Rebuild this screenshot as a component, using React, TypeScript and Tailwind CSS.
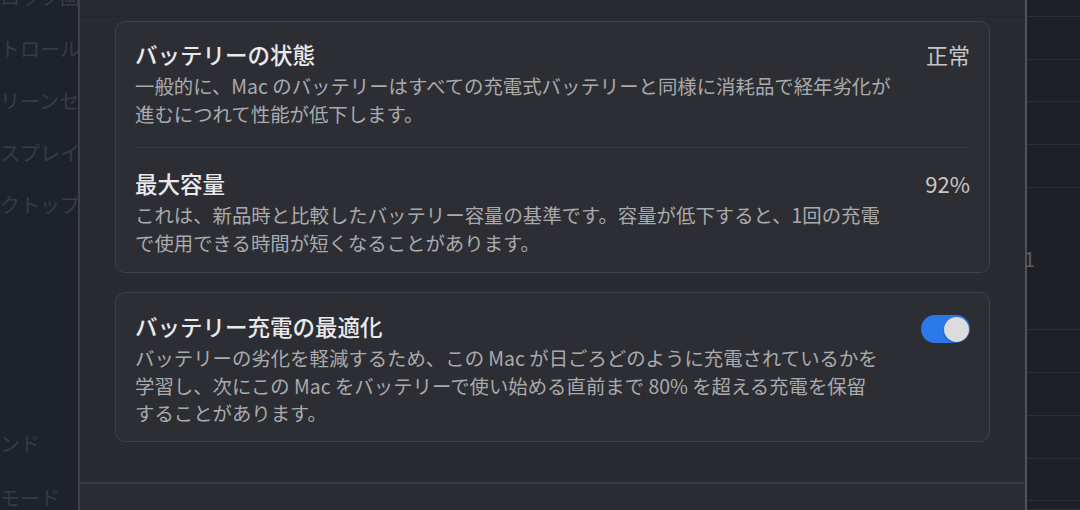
const font = { fontFamily: '"Noto Sans CJK JP", "Noto Sans", sans-serif' };

const sidebarTop = ['ロック画面', 'トロールセ', 'リーンセー', 'スプレイ', 'クトップと'];
const sidebarBottom = ['ンド', 'モード'];

const bgRows = [17, 43, 42, 43, 43, 142, 43, 43, 43, 42, 9];

function Toggle() {
  return (
    <div className="w-[49px] h-[28px] rounded-full bg-[#2b78e9] flex items-center justify-end pr-[1px] shrink-0">
      <div className="w-[25px] h-[25px] rounded-full bg-[#dcdcde] shadow-[0_1px_2px_rgba(0,0,0,0.35)]" />
    </div>
  );
}

function Row({
  title,
  lines,
  value,
  className,
}: {
  title: string;
  lines: string[];
  value?: string;
  className: string;
}) {
  return (
    <div className={`flex justify-between ${className}`}>
      <div className="flex flex-col">
        <div className="text-[22.5px] leading-[28px] font-medium text-[#e9e9eb]">{title}</div>
        <div className="mt-1 text-[19.4px] leading-[28px] text-[#a9aaae]">
          {lines.map((l) => (
            <div key={l} className="whitespace-nowrap">
              {l}
            </div>
          ))}
        </div>
      </div>
      {value && <div className="text-[22px] leading-[28px] text-[#c6c6c9]">{value}</div>}
    </div>
  );
}

export default function App() {
  return (
    <div className="w-[1080px] h-[510px] flex overflow-hidden bg-[#1f2025]" style={font}>
      {/* sidebar behind the sheet */}
      <div className="w-[78px] shrink-0 bg-[#1e222c] overflow-hidden flex flex-col">
        <div className="-mt-[29px] flex flex-col">
          {sidebarTop.map((t) => (
            <div key={t} className="h-[52px] flex items-center whitespace-nowrap text-[20px] text-[#363b47]">
              {t}
            </div>
          ))}
        </div>
        <div className="mt-[186px] flex flex-col">
          {sidebarBottom.map((t) => (
            <div key={t} className="h-[54px] flex items-center whitespace-nowrap text-[20px] text-[#363b47]">
              {t}
            </div>
          ))}
        </div>
      </div>

      {/* sheet */}
      <div className="w-[949px] shrink-0 flex flex-col bg-[#2a2b30] border-l-2 border-l-[#404146] border-r-2 border-r-[#525358]">
        <div className="flex-1 flex flex-col px-[35px]">
          <div className="h-[17px] border-b border-[#25262a] -mx-[35px]" />
          <div className="mt-[4px] rounded-[10px] border border-[#3f4045] bg-[#2d2e33] px-[19px]">
            <Row
              className="pt-[18px] pb-[19px] border-b border-[#3a3b40]"
              title="バッテリーの状態"
              value="正常"
              lines={[
                '一般的に、Mac のバッテリーはすべての充電式バッテリーと同様に消耗品で経年劣化が',
                '進むにつれて性能が低下します。',
              ]}
            />
            <Row
              className="pt-[21px] pb-[15px]"
              title="最大容量"
              value="92%"
              lines={[
                'これは、新品時と比較したバッテリー容量の基準です。容量が低下すると、1回の充電',
                'で使用できる時間が短くなることがあります。',
              ]}
            />
          </div>
          <div className="mt-[19px] rounded-[10px] border border-[#3f4045] bg-[#2d2e33] px-[19px] pt-[19px] pb-[14px] flex justify-between">
            <div className="flex flex-col">
              <div className="text-[22.5px] leading-[28px] font-medium text-[#e9e9eb]">バッテリー充電の最適化</div>
              <div className="mt-1 text-[19.4px] leading-[27.5px] text-[#a9aaae]">
                <div className="whitespace-nowrap">バッテリーの劣化を軽減するため、この Mac が日ごろどのように充電されているかを</div>
                <div className="whitespace-nowrap">学習し、次にこの Mac をバッテリーで使い始める直前まで 80% を超える充電を保留</div>
                <div className="whitespace-nowrap">することがあります。</div>
              </div>
            </div>
            <div className="mt-[3px]">
              <Toggle />
            </div>
          </div>
        </div>
        <div className="h-[28px] border-t-2 border-[#3b3c41] bg-[#2b2c31]" />
      </div>

      {/* table behind the sheet */}
      <div className="flex-1 flex flex-col bg-[#1f2025]">
        {bgRows.map((h, i) => (
          <div
            key={i}
            className="shrink-0 border-b border-[#2d2e33] flex items-center"
            style={{ height: h }}
          >
            {i === 5 && <span className="text-[20px] text-[#5d5e63] -ml-[3px]">1</span>}
          </div>
        ))}
      </div>
    </div>
  );
}
